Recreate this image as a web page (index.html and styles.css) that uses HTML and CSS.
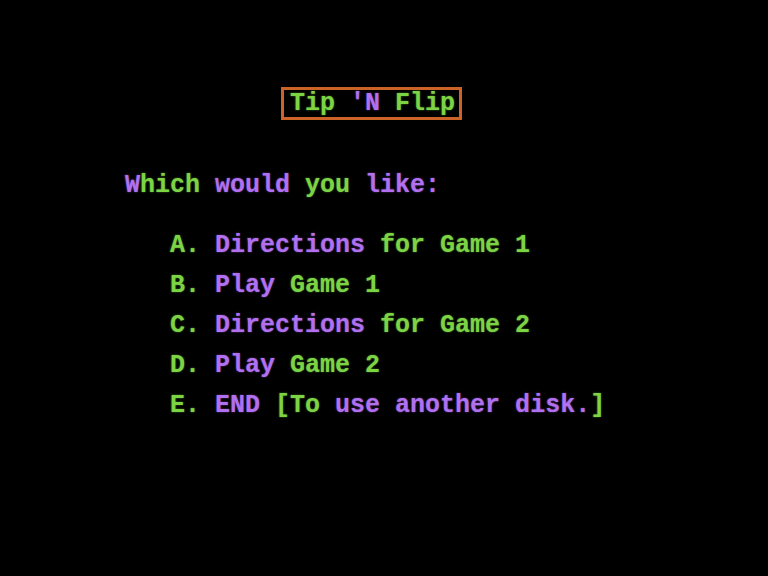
FILE: index.html
```html
<!DOCTYPE html>
<html>
<head>
<meta charset="utf-8">
<link rel="stylesheet" href="styles.css">
</head>
<body>
<div class="screen">
  <div class="title-row"><span class="title"><span class="g">Tip</span> <span class="p">'N</span> <span class="g">Flip</span></span></div>
  <div class="prompt"><span class="p">W</span><span class="g">hich</span> <span class="p">would</span> <span class="g">you</span> <span class="p">like:</span></div>
  <ul class="menu">
    <li><span class="g">A.</span> <span class="p">Directions</span> <span class="g">for Game 1</span></li>
    <li><span class="g">B.</span> <span class="p">Play</span> <span class="g">Game 1</span></li>
    <li><span class="g">C.</span> <span class="p">Directions</span> <span class="g">for Game 2</span></li>
    <li><span class="g">D.</span> <span class="p">Play</span> <span class="g">Game 2</span></li>
    <li><span class="g">E.</span> <span class="p">END</span> <span class="g">[To</span> <span class="p">use another disk.</span><span class="g">]</span></li>
  </ul>
</div>
</body>
</html>
```

FILE: styles.css
```css
html, body {
  margin: 0;
  padding: 0;
  background: #000;
}
.screen {
  width: 768px;
  height: 576px;
  box-sizing: border-box;
  padding-top: 87px;
  font-family: "Liberation Mono", "DejaVu Sans Mono", monospace;
  font-size: 25px;
  font-weight: bold;
  white-space: nowrap;
  color: #d8c8f0;
}
.g { color: #7cd445; text-shadow: 0 0 2px rgba(124, 212, 69, 0.6); }
.p { color: #b070f0; text-shadow: 0 0 2px rgba(176, 112, 240, 0.6); }
.title-row {
  padding-left: 281px;
  height: 33px;
}
.title {
  display: inline-block;
  border: 3px solid #cc6428;
  padding: 0 4px 0 6px;
  line-height: 27px;
  height: 27px;
}
.prompt {
  margin-top: 46px;
  padding-left: 125px;
  line-height: 40px;
  height: 40px;
}
.menu {
  list-style: none;
  margin: 20px 0 0 0;
  padding: 0 0 0 170px;
}
.menu li {
  line-height: 40px;
  height: 40px;
}
```
